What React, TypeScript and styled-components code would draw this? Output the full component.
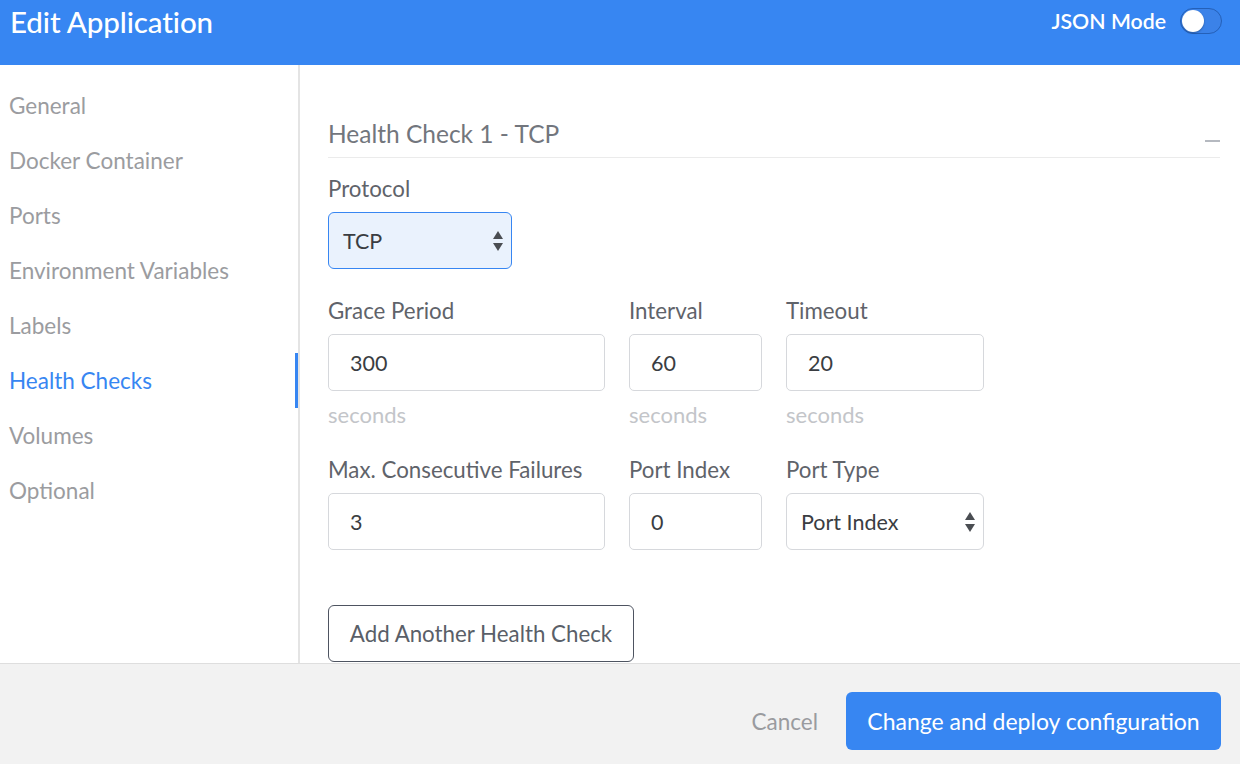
import React from "react";
import styled, { createGlobalStyle } from "styled-components";

const Global = createGlobalStyle`
  html, body { margin: 0; padding: 0; }
  body { font-family: "Lato", "Liberation Sans", sans-serif; background: #fff; }
  * { box-sizing: border-box; }
`;

const Page = styled.div`
  width: 1240px;
  height: 764px;
  display: flex;
  flex-direction: column;
  overflow: hidden;
`;

const Header = styled.header`
  height: 65px;
  flex: none;
  background: #3786f2;
  display: flex;
  justify-content: space-between;
  align-items: flex-start;
  padding: 4px 18px 0 10px;
  color: #fff;
`;

const Title = styled.h1`
  margin: 0;
  font-size: 29.5px;
  font-weight: 500;
  line-height: 36px;
  letter-spacing: -0.1px;
`;

const JsonToggle = styled.div`
  display: flex;
  align-items: center;
  gap: 14px;
  margin-top: 4px;
  font-size: 21.3px;
  font-weight: 600;
`;

const Track = styled.span`
  width: 42px;
  height: 26px;
  border-radius: 13px;
  background: #3b82e8;
  border: 1.5px solid #2460b8;
  display: flex;
  align-items: center;
  padding: 1px;
`;

const Knob = styled.span`
  width: 22px;
  height: 22px;
  border-radius: 50%;
  background: #fff;
  box-shadow: 0 1px 2px rgba(0, 0, 0, 0.3);
`;

const Body = styled.div`
  flex: 1;
  display: flex;
  min-height: 0;
`;

const Sidebar = styled.nav`
  width: 300px;
  flex: none;
  border-right: 2px solid #e4e4e4;
  padding-top: 13px;
  display: flex;
  flex-direction: column;
`;

const NavItem = styled.div<{ $active?: boolean }>`
  position: relative;
  height: 55px;
  line-height: 55px;
  padding-left: 9px;
  font-size: 22.5px;
  color: ${(p) => (p.$active ? "#3786f2" : "#9b9ca0")};
  &::after {
    content: "";
    display: ${(p) => (p.$active ? "block" : "none")};
    position: absolute;
    right: 0;
    top: 0;
    width: 3px;
    height: 55px;
    background: #3786f2;
  }
`;

const Main = styled.main`
  flex: 1;
  padding: 54px 20px 0 28px;
  overflow: hidden;
`;

const SectionHead = styled.div`
  display: flex;
  justify-content: space-between;
  align-items: center;
  border-bottom: 1px solid #ebebeb;
  padding-bottom: 8px;
`;

const SectionTitle = styled.h2`
  margin: 0;
  font-size: 24.5px;
  line-height: 30px;
  font-weight: 400;
  color: #72767d;
`;

const Collapse = styled.span`
  width: 15px;
  height: 2px;
  background: #b5b9c0;
  margin-top: 14px;
`;

const Label = styled.div`
  font-size: 22.3px;
  line-height: 26px;
  color: #5f636a;
  margin-bottom: 10px;
`;

const ProtocolBlock = styled.div`
  margin-top: 18px;
`;

const FieldRow = styled.div`
  display: grid;
  grid-template-columns: 277px 133px 198px;
  column-gap: 24px;
  margin-top: 29px;
`;

const Field = styled.div`
  display: flex;
  flex-direction: column;
`;

const Input = styled.div`
  height: 57px;
  border: 1.5px solid #d6d8dc;
  border-radius: 5px;
  display: flex;
  align-items: center;
  padding-left: 21px;
  font-size: 21.5px;
  color: #3a3d42;
`;

const SelectBox = styled.div<{ $focused?: boolean; $width?: number }>`
  width: ${(p) => (p.$width ? `${p.$width}px` : "auto")};
  height: 57px;
  border: 1.5px solid ${(p) => (p.$focused ? "#3786f2" : "#d6d8dc")};
  background: ${(p) => (p.$focused ? "#eaf2fd" : "#fff")};
  border-radius: 6px;
  display: flex;
  align-items: center;
  justify-content: space-between;
  padding: 0 7px 0 14px;
  font-size: 21.5px;
  color: #3a3d42;
`;

const Help = styled.div`
  margin-top: 11px;
  font-size: 22px;
  line-height: 26px;
  color: #c3c5c9;
`;

const AddButton = styled.button`
  margin-top: 55px;
  height: 57px;
  width: 306px;
  border: 1.5px solid #4e5461;
  border-radius: 6px;
  background: #fff;
  font-family: inherit;
  font-size: 22.3px;
  color: #5a5f68;
  padding: 0;
`;

const Footer = styled.footer`
  height: 101px;
  flex: none;
  background: #f2f2f2;
  border-top: 1.5px solid #dedede;
  display: flex;
  justify-content: flex-end;
  align-items: flex-start;
  gap: 28px;
  padding: 28px 19px 0 0;
`;

const Cancel = styled.button`
  border: none;
  background: none;
  font-family: inherit;
  font-size: 22.5px;
  color: #9a9b9f;
  height: 58px;
  padding: 0;
`;

const Primary = styled.button`
  height: 58px;
  width: 375px;
  border: none;
  border-radius: 6px;
  background: #3786f2;
  color: #fff;
  font-family: inherit;
  font-size: 23px;
  padding: 0;
`;

const Arrows = () => (
  <svg width="12" height="22" viewBox="0 0 12 22">
    <path d="M6 1 L11 9 L1 9 Z" fill="#4a4d52" />
    <path d="M6 21 L11 13 L1 13 Z" fill="#4a4d52" />
  </svg>
);

const navItems = [
  "General",
  "Docker Container",
  "Ports",
  "Environment Variables",
  "Labels",
  "Health Checks",
  "Volumes",
  "Optional",
];

export default function App() {
  return (
    <Page>
      <Global />
      <Header>
        <Title>Edit Application</Title>
        <JsonToggle>
          JSON Mode
          <Track>
            <Knob />
          </Track>
        </JsonToggle>
      </Header>
      <Body>
        <Sidebar>
          {navItems.map((n) => (
            <NavItem key={n} $active={n === "Health Checks"}>
              {n}
            </NavItem>
          ))}
        </Sidebar>
        <Main>
          <SectionHead>
            <SectionTitle>Health Check 1 - TCP</SectionTitle>
            <Collapse />
          </SectionHead>
          <ProtocolBlock>
            <Label>Protocol</Label>
            <SelectBox $focused $width={184}>
              TCP
              <Arrows />
            </SelectBox>
          </ProtocolBlock>
          <FieldRow>
            <Field>
              <Label>Grace Period</Label>
              <Input>300</Input>
              <Help>seconds</Help>
            </Field>
            <Field>
              <Label>Interval</Label>
              <Input>60</Input>
              <Help>seconds</Help>
            </Field>
            <Field>
              <Label>Timeout</Label>
              <Input>20</Input>
              <Help>seconds</Help>
            </Field>
          </FieldRow>
          <FieldRow>
            <Field>
              <Label>Max. Consecutive Failures</Label>
              <Input>3</Input>
            </Field>
            <Field>
              <Label>Port Index</Label>
              <Input>0</Input>
            </Field>
            <Field>
              <Label>Port Type</Label>
              <SelectBox>
                Port Index
                <Arrows />
              </SelectBox>
            </Field>
          </FieldRow>
          <AddButton>Add Another Health Check</AddButton>
        </Main>
      </Body>
      <Footer>
        <Cancel>Cancel</Cancel>
        <Primary>Change and deploy configuration</Primary>
      </Footer>
    </Page>
  );
}
